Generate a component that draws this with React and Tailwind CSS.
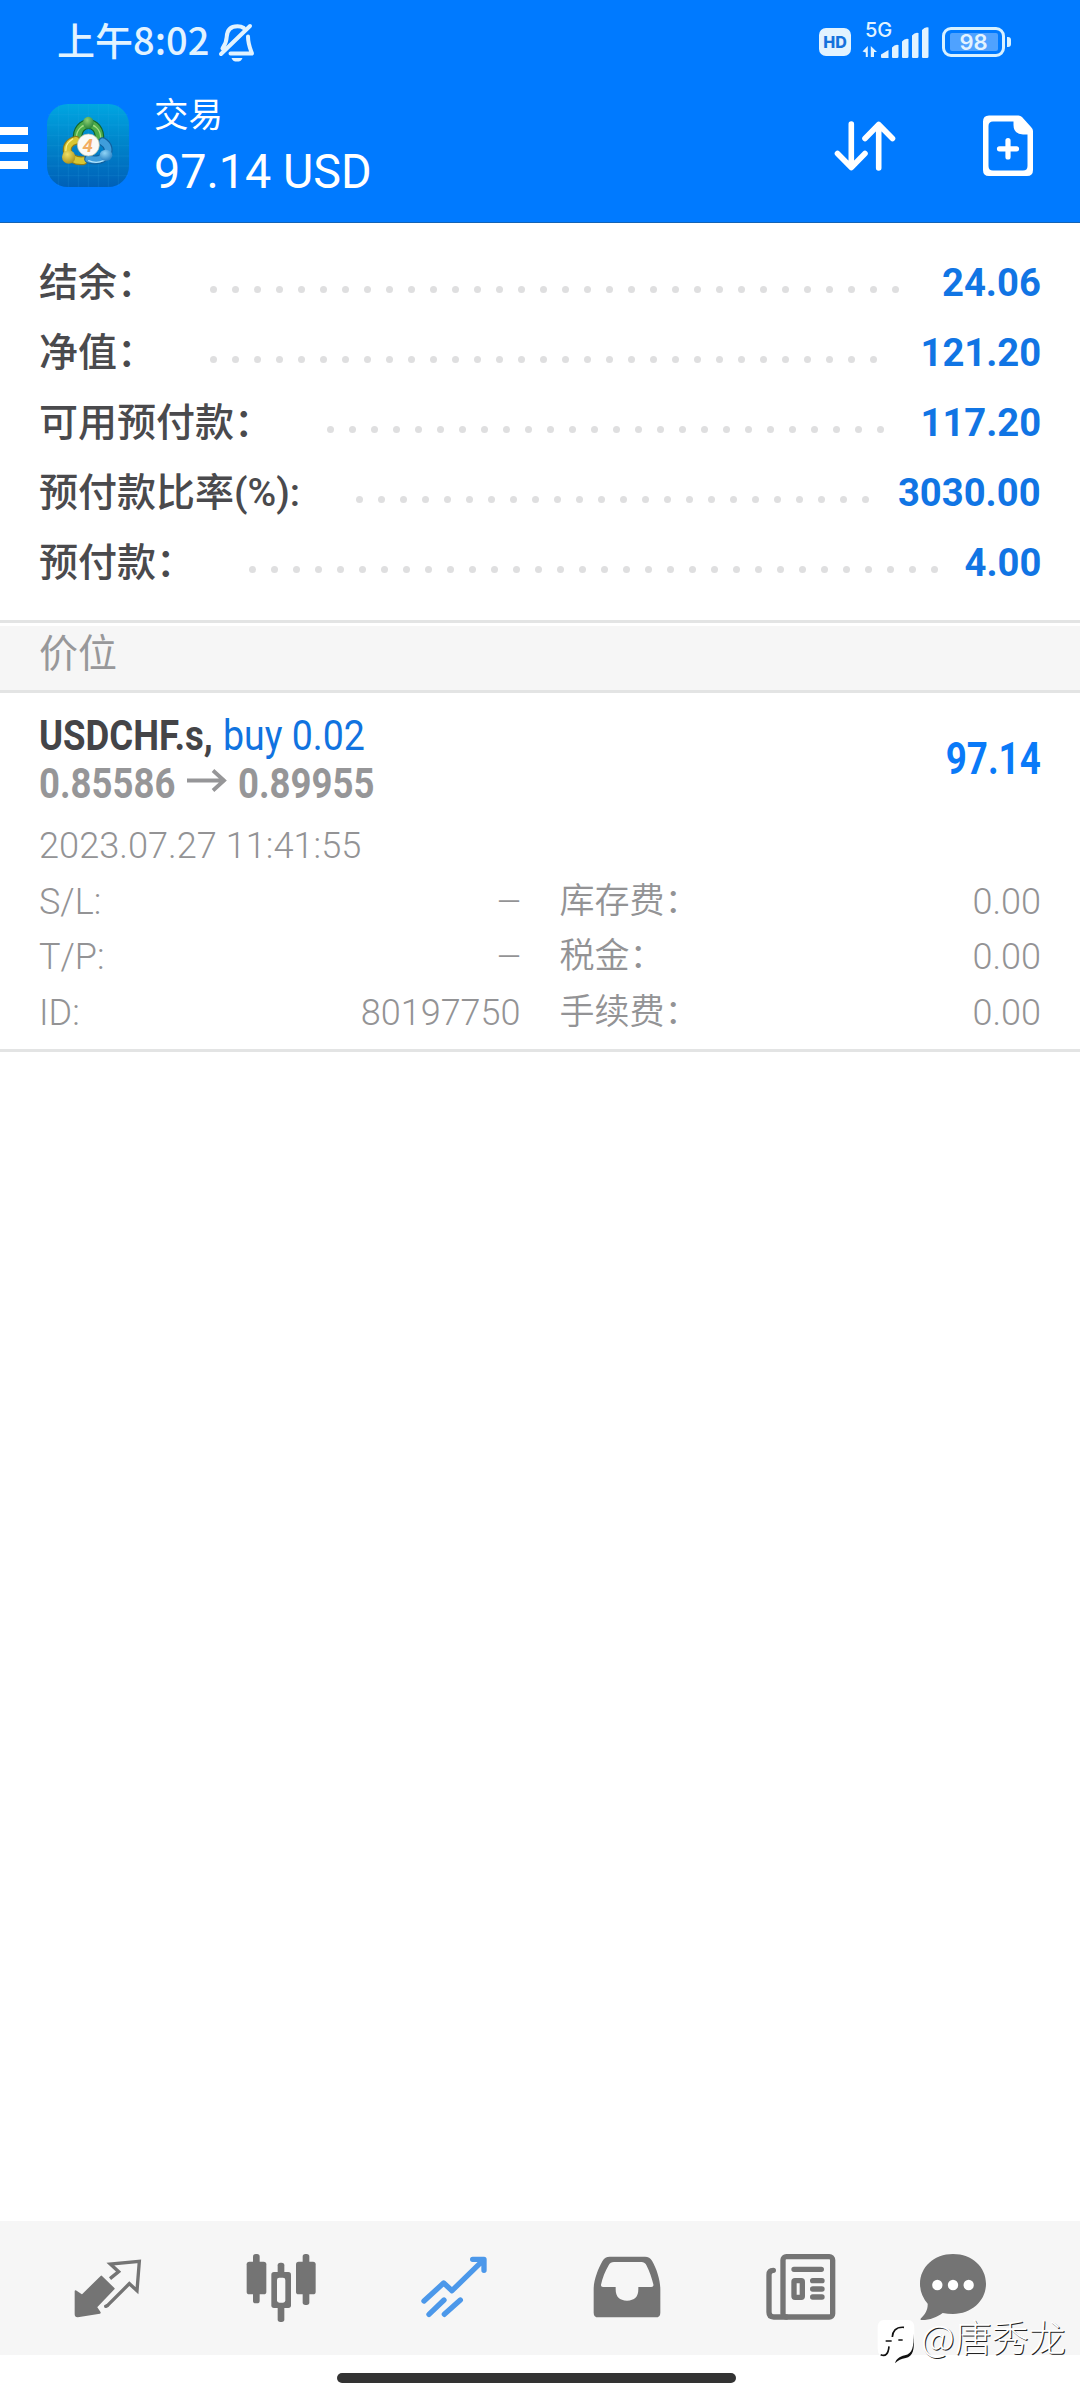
const summary = [
  { label: '结余：', value: '24.06', dots: 32, start: 'ml-[210px]' },
  { label: '净值：', value: '121.20', dots: 31, start: 'ml-[210px]' },
  { label: '可用预付款：', value: '117.20', dots: 26, start: 'ml-[327px]' },
  { label: '预付款比率(%):', value: '3030.00', dots: 24, start: 'ml-[356px]' },
  { label: '预付款：', value: '4.00', dots: 32, start: 'ml-[249px]' },
];

const leftDetails = [
  ['S/L:', '—'],
  ['T/P:', '—'],
  ['ID:', '80197750'],
];

const rightDetails = [
  ['库存费：', '0.00'],
  ['税金：', '0.00'],
  ['手续费：', '0.00'],
];

function StatusBar() {
  return (
    <div className="flex h-[84px] items-start pl-[57px] text-[#e2f3ff]">
      <div className="mt-[12px] w-[158px] whitespace-nowrap font-['Noto_Sans_CJK_SC',sans-serif] text-[38px] font-medium leading-[54px]">
        上午8:02
      </div>
      <svg className="ml-[2px] mt-[20px] h-[44px] w-[42px]" viewBox="0 0 42 44" fill="none" stroke="currentColor" strokeWidth="4" strokeLinecap="round" strokeLinejoin="round">
        <path d="M5.500 28.500C8 25 9.500 22 9.700 17C10 9.500 14 6.200 20.500 6.200C23 6.200 25 6.800 26.800 8" />
        <path d="M31 16.500C31 24 33 28 35 33.500H13.500" />
        <path d="M33 6L4 34" />
        <path d="M14.500 38H25.500C24.500 41 22.500 41.600 20 41.600S15.500 41 14.500 38Z" fill="currentColor" stroke="none" />
      </svg>
      <div className="ml-[560px] mt-[28px] flex h-[28px] w-[32px] items-center justify-center rounded-[7px] bg-[#e2f3ff] font-['Inter',sans-serif] text-[16px] font-extrabold leading-none text-[#1572dc]">
        HD
      </div>
      <div className="ml-[11px] mt-[20px] flex h-[40px] w-[67px] flex-col">
        <div className="pl-[3px] font-['Inter',sans-serif] text-[20px] font-medium leading-[21px]">5G</div>
        <svg className="-mt-[15px] h-[34px] w-[67px] shrink-0" viewBox="0 0 67 34" fill="currentColor">
          <path d="M0.500 25.500L5.800 20V31H3.800V26.500Z M8.800 20L15 26H12V31H8.800Z" />
          <path d="M26.500 24V32H20Q19 32 19 31V28.500Z M36.500 19V30.500Q36.500 32 35 32H31Q30 32 30 31V21.500Q33 18 36.500 19Z M46.500 13V30.500Q46.500 32 45 32H41Q40 32 40 31V15.500Q43 12 46.500 13Z M56.500 7V30.500Q56.500 32 55 32H51Q50 32 50 31V9.500Q53 6 56.500 7Z M66.500 1.500V30.500Q66.500 32 65 32H61Q60 32 60 31V4Q63 0.500 66.500 1.500Z" />
        </svg>
      </div>
      <div className="ml-[13px] mt-[27px] flex items-center gap-[2px]">
        <div className="flex h-[30px] w-[63px] items-center justify-center rounded-[9px] border-[3px] border-[#d8f1ff] p-[3px]">
          <div className="flex h-[18px] w-[48px] items-center justify-center rounded-[2px] bg-[#4fa2ff] font-['Inter',sans-serif] text-[22px] font-semibold leading-none">
            98
          </div>
        </div>
        <div className="h-[10px] w-[4px] rounded-r-[3px] bg-[#d8f1ff]" />
      </div>
    </div>
  );
}

function AppLogo() {
  return (
    <svg className="h-[83px] w-[82px]" viewBox="51 43 246 249">
      <defs>
        <linearGradient id="bg" x1="0" y1="0" x2="0" y2="1">
          <stop offset="0" stopColor="#00a6e2" />
          <stop offset="0.450" stopColor="#0086cb" />
          <stop offset="1" stopColor="#0060b8" />
        </linearGradient>
        <radialGradient id="gr" cx="0.400" cy="0.300" r="0.800">
          <stop offset="0" stopColor="#8ccf70" />
          <stop offset="1" stopColor="#1f7d36" />
        </radialGradient>
        <radialGradient id="ye" cx="0.400" cy="0.300" r="0.800">
          <stop offset="0" stopColor="#f0e066" />
          <stop offset="1" stopColor="#a58a14" />
        </radialGradient>
        <radialGradient id="bl" cx="0.400" cy="0.300" r="0.800">
          <stop offset="0" stopColor="#8fd4f6" />
          <stop offset="1" stopColor="#1a76bd" />
        </radialGradient>
      </defs>
      <rect x="51" y="43" width="246" height="249" rx="62" fill="url(#bg)" />
      <g stroke="#38b6e8" strokeOpacity="0.220" strokeWidth="2">
        <path d="M85 46V289M115 43V292M145 43V292M175 43V292M205 43V292M235 43V292M265 46V289M54 75H294M51 106H297M51 137H297M51 168H297M51 199H297M51 229H297M54 258H294" />
      </g>
      <g fill="none" strokeLinecap="round">
        <path d="M143 150C138 88 213 88 208 150" stroke="#13652c" strokeWidth="29" />
        <path d="M143 150C138 88 213 88 208 150" stroke="#4cac49" strokeWidth="22" />
        <path d="M139 142C143 92 208 92 212 142" stroke="#a5dc84" strokeWidth="4" />
        <path d="M138 152C94 162 108 218 160 213" stroke="#8f7b18" strokeWidth="27" />
        <path d="M138 152C94 162 108 218 160 213" stroke="#d8c632" strokeWidth="20" />
        <path d="M128 148C106 162 104 180 112 194" stroke="#fff28c" strokeWidth="4" />
        <path d="M218 156C256 180 222 222 176 208" stroke="#11619f" strokeWidth="27" />
        <path d="M218 156C256 180 222 222 176 208" stroke="#3f9ddb" strokeWidth="20" />
        <path d="M176 213C200 224 222 216 234 202" stroke="#b3e4fb" strokeWidth="4" />
      </g>
      <ellipse cx="175" cy="99" rx="16" ry="18" fill="url(#gr)" />
      <circle cx="116" cy="202" r="20" fill="url(#ye)" />
      <ellipse cx="228" cy="197" rx="19" ry="17" fill="url(#bl)" />
      <circle cx="175" cy="166" r="33" fill="#fbfaf6" stroke="#b9c1a5" strokeWidth="2" />
      <text x="173" y="187" textAnchor="middle" fontFamily="Roboto" fontWeight="700" fontStyle="italic" fontSize="56" fill="#f2ad62">4</text>
    </svg>
  );
}

function Header() {
  return (
    <header className="h-[223px] border-b border-[#1463b4] bg-[#007aff]">
      <StatusBar />
      <div className="flex items-start text-white">
        <div className="mt-[43px] flex w-[28px] flex-col gap-[9px]">
          <div className="h-[8px] bg-white" />
          <div className="h-[8px] bg-white" />
          <div className="h-[8px] bg-white" />
        </div>
        <div className="ml-[19px] mt-[20px]">
          <AppLogo />
        </div>
        <div className="ml-[25px] mt-[9px] w-[680px]">
          <div className="text-[34.5px] leading-[44px]">交易</div>
          <div className="mt-[7px] w-max origin-left scale-x-[0.973] text-[48px] font-[370] leading-[56px]">97.14 USD</div>
        </div>
        <svg className="mt-[36px] h-[52px] w-[62px]" viewBox="0 0 62 52" fill="none" stroke="#fff" strokeWidth="5.600" strokeLinecap="round" strokeLinejoin="round">
          <path d="M17.300 4V47M3.500 33.500L17.300 47.500L31 33.500" />
          <path d="M44.700 48V4.500M31 18.500L44.700 4.500L58.500 18.500" />
        </svg>
        <svg className="ml-[86px] mt-[31px] h-[62px] w-[52px]" viewBox="0 0 52 62">
          <path fill="#fff" fillRule="evenodd" d="M7 0.500H36.500Q38.500 0.500 40 2L49 12Q51 14 51 16V55Q51 61 45 61H7Q1 61 1 55V6.500Q1 0.500 7 0.500ZM11 6.500Q6.500 6.500 6.500 11V51Q6.500 55.500 11 55.500H41Q45.500 55.500 45.500 51V19.500H41Q31.500 19 31.500 10V6.500Z" />
          <path d="M26 25.500V42M17.500 33.800H34.500" stroke="#fff" strokeWidth="5.200" strokeLinecap="round" />
        </svg>
      </div>
    </header>
  );
}

function SummaryRow({ label, value, dots, start }) {
  return (
    <div className="relative flex h-[70px] items-center justify-between px-[39px]">
      <span className="whitespace-nowrap text-[39px] font-medium leading-[68px] text-[#4a4a4d]">{label}</span>
      <span className="w-max origin-right scale-x-[0.98] text-[39px] font-bold leading-[70px] text-[#1175e4]">{value}</span>
      <div className={`absolute inset-x-0 top-[38px] flex gap-[15px] ${start}`}>
        {Array.from({ length: dots }, (_, i) => (
          <div key={i} className="size-[7px] shrink-0 rounded-full bg-[#dfdfe0]" />
        ))}
      </div>
    </div>
  );
}

function Details({ rows, labelClass }) {
  return (
    <div className="flex-1">
      {rows.map(([label, value]) => (
        <div key={label} className="flex h-[55.5px] justify-between leading-[55.5px]">
          <span className={labelClass}>{label}</span>
          <span className={value === '—' ? 'w-max origin-right scale-x-[0.86]' : ''}>{value}</span>
        </div>
      ))}
    </div>
  );
}

function Position() {
  return (
    <section className="h-[359px] border-b-[3px] border-[#e3e4e4] px-[39px] pt-[18px]">
      <div className="flex items-center justify-between">
        <div>
          <div className="flex h-[48px] text-[43px] leading-[48px]">
            <div className="w-[183.5px]">
              <div className="w-max origin-left scale-x-[0.85] font-bold text-[#444447]">USDCHF.s,</div>
            </div>
            <div className="w-max origin-left scale-x-[0.872] text-[#1173e0]">buy 0.02</div>
          </div>
          <div className="flex h-[48px] text-[43px] font-bold leading-[48px] text-[#969698]">
            <div className="w-[148px]">
              <div className="w-max origin-left scale-x-[0.85]">0.85586</div>
            </div>
            <svg className="mt-[10px] h-[24px] w-[40px]" viewBox="0 0 40 24" fill="none" stroke="currentColor" strokeWidth="3.800">
              <path d="M0 11.500H38M26 1.500L37 11.500L26 21.500" />
            </svg>
            <div className="ml-[11px] w-max origin-left scale-x-[0.85]">0.89955</div>
          </div>
        </div>
        <div className="w-max origin-right scale-x-[0.835] text-[44px] font-bold leading-[50px] text-[#0a7af8]">97.14</div>
      </div>
      <div className="mt-[12px] text-[36px] font-[350] text-[#939395]">
        <div className="h-[55.5px] w-max origin-left scale-x-[1.005] leading-[55.5px]">2023.07.27 11:41:55</div>
        <div className="flex gap-[39px]">
          <Details rows={leftDetails} />
          <Details rows={rightDetails} labelClass="text-[35px] leading-[54px]" />
        </div>
      </div>
    </section>
  );
}

function BottomNav() {
  return (
    <nav className="flex h-[134px] items-start gap-[73px] bg-[#f6f6f6] pl-[58px] text-[#747474]">
      <svg className="h-[134px] w-[100px] shrink-0" viewBox="56 63 300 402" fill="none" stroke="currentColor">
        <path fill="currentColor" strokeWidth="6" strokeLinejoin="round" d="M109 274L128 287L186 230L223 266L170 321L181 338L115 349Q109 349 109 343Z" />
        <path strokeWidth="10" d="M212 236L238 215L213 192L300 184L293 272L270 251L204 317" />
        <path strokeWidth="10" strokeLinecap="round" d="M199 319L204 317" />
      </svg>
      <svg className="h-[134px] w-[100px] shrink-0" viewBox="573 63 300 402" fill="currentColor">
        <rect x="639" y="162" width="20" height="148" rx="8" />
        <rect x="620" y="185" width="59" height="98" rx="8" />
        <rect x="788" y="162" width="20" height="153" rx="8" />
        <rect x="768" y="185" width="59" height="98" rx="8" />
        <rect x="713" y="188" width="20" height="178" rx="8" />
        <rect x="694" y="216" width="59" height="108" rx="8" />
        <rect x="711" y="233" width="25" height="75" rx="7" fill="#f7f7f7" />
      </svg>
      <svg className="h-[134px] w-[100px] shrink-0" viewBox="72 63 300 402" fill="none" stroke="#4c98ea" strokeWidth="16">
        <path strokeLinecap="round" strokeLinejoin="round" d="M132 303L191 249L216 272L306 184M278 178H312V211" />
        <path strokeLinecap="round" d="M147 343L192 300M193 343L241 300" />
        <path d="M300 174H316V190Z" fill="#4c98ea" stroke="none" />
      </svg>
      <svg className="h-[134px] w-[100px] shrink-0" viewBox="592 63 300 402" fill="currentColor">
        <path fillRule="evenodd" d="M690 170H796Q810 170 817 182C831 206 842 240 842 268V338Q842 352 828 352H656Q642 352 642 338V268C642 240 655 206 669 182Q676 170 690 170ZM703 186Q692 186 687 196C677 212 668 235 664 254Q663 261 670 261H708V268Q708 302 742 302T776 268V261H815Q823 261 821 253C817 235 809 213 801 197Q796 186 785 186Z" />
      </svg>
      <svg className="h-[134px] w-[100px] shrink-0" viewBox="31 63 300 402" fill="none" stroke="currentColor">
        <rect x="130" y="170" width="149" height="181" rx="10" strokeWidth="16" />
        <path d="M101 211Q88 211 88 224V337Q88 351 102 351H140" strokeWidth="16" strokeLinecap="round" />
        <path d="M163 208H245M219 242H247M219 267H247M219 291H247" strokeWidth="16" strokeLinecap="round" />
        <rect x="163" y="242" width="25" height="50" rx="3" strokeWidth="16" />
      </svg>
      <svg className="-ml-[20px] h-[134px] w-[100px] shrink-0" viewBox="489 63 300 402" fill="currentColor">
        <path d="M639 162C697 162 738 202 738 251C738 301 697 341 639 342Q623 342 608 339C591 352 567 361 543 360Q540 359 543 355C556 344 564 328 563 311Q540 285 540 251C540 202 582 162 639 162Z" />
        <g fill="#fff">
          <circle cx="592" cy="255" r="15.500" />
          <circle cx="639" cy="255" r="15.500" />
          <circle cx="686" cy="255" r="15.500" />
        </g>
      </svg>
    </nav>
  );
}

function Watermark() {
  return (
    <div className="absolute left-[877px] top-[2312px] flex h-[52px] items-start">
      <svg className="mt-[6px] h-[46px] w-[40px]" viewBox="410 355 120 138" fill="none">
        <path d="M430 361H502Q522 361 522 385V440Q522 468 502 470L466 486V472H432Q412 472 412 446V385Q412 361 430 361Z" fill="#fff" />
        <path d="M518 402C522 440 516 462 494 467C476 471 468 478 464 491C474 481 482 477 496 475C518 470 525 450 518 402Z" fill="#111" />
        <path d="M491 383C465 381 457 396 456 412M436 424H454M474 421H487M446 440C444 462 436 472 421 465" stroke="#111" strokeWidth="5" />
      </svg>
      <div className="ml-[4px] flex whitespace-nowrap font-['Noto_Sans_CJK_SC',sans-serif] text-[37px] font-light leading-[48px] text-white [text-shadow:1px_1px_0.5px_#222]">
        @唐秀龙
      </div>
    </div>
  );
}

export default function App() {
  return (
    <div className="relative flex h-[2400px] w-[1080px] flex-col overflow-hidden bg-white font-['Roboto','Noto_Sans_CJK_SC',sans-serif]">
      <Header />
      <section className="h-[397px] pt-[25px]">
        {summary.map((row) => (
          <SummaryRow key={row.label} {...row} />
        ))}
      </section>
      <div className="border-y-[3px] border-[#e3e4e4] pt-[3px]">
        <div className="h-[64px] bg-[#f6f6f6] pl-[39px] text-[39px] leading-[57px] text-[#98989a]">价位</div>
      </div>
      <Position />
      <main className="flex-1" />
      <BottomNav />
      <div className="flex h-[45px] items-start justify-center pt-[18px]">
        <div className="mr-[7px] h-[10px] w-[399px] rounded-full bg-[#333333]" />
      </div>
      <Watermark />
    </div>
  );
}
